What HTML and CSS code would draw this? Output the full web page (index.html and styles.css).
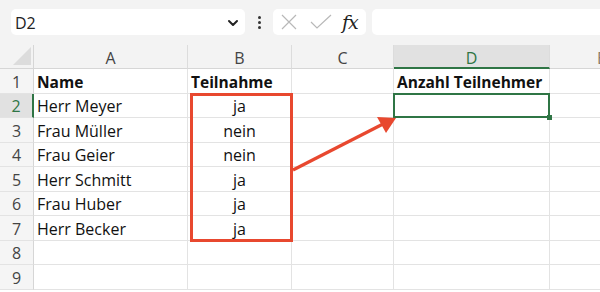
FILE: index.html
```html
<!DOCTYPE html>
<html lang="de">
<head>
<meta charset="utf-8">
<link rel="stylesheet" href="styles.css">
</head>
<body>
<div class="toolbar">
  <div class="namebox">
    <span class="ref">D2</span>
    <svg class="chev" width="12" height="8" viewBox="0 0 12 8"><path d="M2 2 L6 6 L10 2" fill="none" stroke="#222" stroke-width="2" stroke-linecap="round" stroke-linejoin="round"/></svg>
  </div>
  <div class="dots"><span></span><span></span><span></span></div>
  <div class="fbuttons">
    <svg width="16" height="16" viewBox="0 0 16 16"><path d="M1 1 L15 15 M15 1 L1 15" stroke="#b8b8b8" stroke-width="1.2"/></svg>
    <svg width="22" height="16" viewBox="0 0 22 16"><path d="M1 8 L7 14 L21 1" fill="none" stroke="#b8b8b8" stroke-width="1.2"/></svg>
    <span class="fx">fx</span>
  </div>
  <div class="finput"></div>
</div>
<div class="sheet">
  <div class="grid">
    <div class="corner"><svg width="20" height="20" viewBox="0 0 20 20"><path d="M19 1 L19 19 L1 19 Z" fill="#dcdcdc"/></svg></div>
    <div class="ch">A</div>
    <div class="ch">B</div>
    <div class="ch">C</div>
    <div class="ch sel">D</div>
    <div class="ch last">E</div>

    <div class="rh">1</div><div class="c b">Name</div><div class="c b">Teilnahme</div><div class="c"></div><div class="c b">Anzahl Teilnehmer</div><div class="c"></div>
    <div class="rh sel">2</div><div class="c">Herr Meyer</div><div class="c m">ja</div><div class="c"></div><div class="c active"></div><div class="c"></div>
    <div class="rh">3</div><div class="c">Frau Müller</div><div class="c m">nein</div><div class="c"></div><div class="c"></div><div class="c"></div>
    <div class="rh">4</div><div class="c">Frau Geier</div><div class="c m">nein</div><div class="c"></div><div class="c"></div><div class="c"></div>
    <div class="rh">5</div><div class="c">Herr Schmitt</div><div class="c m">ja</div><div class="c"></div><div class="c"></div><div class="c"></div>
    <div class="rh">6</div><div class="c">Frau Huber</div><div class="c m">ja</div><div class="c"></div><div class="c"></div><div class="c"></div>
    <div class="rh">7</div><div class="c">Herr Becker</div><div class="c m">ja</div><div class="c"></div><div class="c"></div><div class="c"></div>
    <div class="rh">8</div><div class="c"></div><div class="c"></div><div class="c"></div><div class="c"></div><div class="c"></div>
    <div class="rh">9</div><div class="c"></div><div class="c"></div><div class="c"></div><div class="c"></div><div class="c"></div>
  </div>
  <svg class="overlay" width="600" height="247" viewBox="0 45 600 247">
    <rect x="191.5" y="94.5" width="100" height="146" fill="none" stroke="#e8482f" stroke-width="3"/>
    <path d="M293 170 L384 123.5" stroke="#e8482f" stroke-width="3.2" fill="none"/>
    <path d="M396 118 L377 117 L386 133 Z" fill="#e8482f"/>
  </svg>
</div>
</body>
</html>
```
FILE: styles.css
```css
html, body { margin: 0; padding: 0; background: #fff; }
body { width: 600px; height: 292px; overflow: hidden; font-family: "Open Sans", "Noto Sans", sans-serif; color: #111; }

.toolbar { height: 45px; background: #f3f3f3; display: flex; align-items: flex-start; padding-top: 9px; box-sizing: border-box; }
.namebox { margin-left: 11px; width: 234px; height: 26px; background: #fff; border-radius: 5px; display: flex; align-items: center; justify-content: space-between; box-sizing: border-box; padding: 1px 6px 0 4px; }
.ref { font-size: 16px; color: #222; }
.chev { display: block; }
.dots { width: 28px; height: 26px; display: flex; flex-direction: column; align-items: center; justify-content: center; gap: 2px; }
.dots span { width: 3px; height: 3px; background: #333; border-radius: 50%; }
.fbuttons { width: 93px; height: 26px; background: #fff; border-radius: 5px; display: flex; align-items: center; box-sizing: border-box; padding-left: 8px; gap: 13px; }
.fbuttons svg { display: block; }
.fx { font-family: "DejaVu Serif", "Liberation Serif", serif; font-style: italic; font-size: 19px; color: #222; margin-left: -3px; letter-spacing: -1px; line-height: 1; }
.finput { margin-left: 6px; flex: 1; height: 26px; background: #fff; border-radius: 5px 0 0 5px; }

.sheet { position: relative; }
.grid { display: grid; grid-template-columns: 34px 154px 104px 102px 156px 1fr; grid-template-rows: 24px repeat(9, 24.5px); }
.corner { background: #f3f3f3; border-right: 1px solid #d6d6d6; border-bottom: 1px solid #d6d6d6; display: flex; align-items: flex-end; justify-content: flex-end; padding: 0 1px 2px 0; box-sizing: border-box; }
.corner svg { display: block; }
.ch { background: #f3f3f3; border-right: 1px solid #dcdcdc; border-bottom: 1px solid #d6d6d6; box-sizing: border-box; display: flex; align-items: center; justify-content: center; padding-top: 2px; font-size: 16px; color: #444; }
.ch.sel { background: #e1e1e1; color: #2f7545; border-bottom: 2px solid #2f7545; padding-top: 3px; }
.ch.last { justify-content: flex-start; padding-left: 47px; color: #8a7a6a; }
.rh { background: #f5f5f5; border-right: 1px solid #d6d6d6; border-bottom: 1px solid #e3e3e3; box-sizing: border-box; display: flex; align-items: center; justify-content: center; padding-top: 2px; font-size: 16px; color: #444; }
.rh.sel { background: #e1e1e1; color: #2f7545; border-right: 2px solid #2f7545; }
.c { border-right: 1px solid #e3e3e3; border-bottom: 1px solid #e3e3e3; box-sizing: border-box; display: flex; align-items: center; padding: 2px 0 0 3px; font-size: 16px; color: #111; white-space: nowrap; overflow: visible; }
.c.b { font-weight: 700; font-size: 15.5px; }
.c.m { justify-content: center; padding-left: 0; }
.active { position: relative; }
.active::after { content: ""; position: absolute; left: -1px; top: -1px; right: -1px; bottom: -1px; border: 2px solid #2f7545; }
.active::before { content: ""; position: absolute; right: -3px; bottom: -3px; width: 5px; height: 5px; background: #2f7545; z-index: 1; }
.overlay { position: absolute; left: 0; top: 0; pointer-events: none; }
```
